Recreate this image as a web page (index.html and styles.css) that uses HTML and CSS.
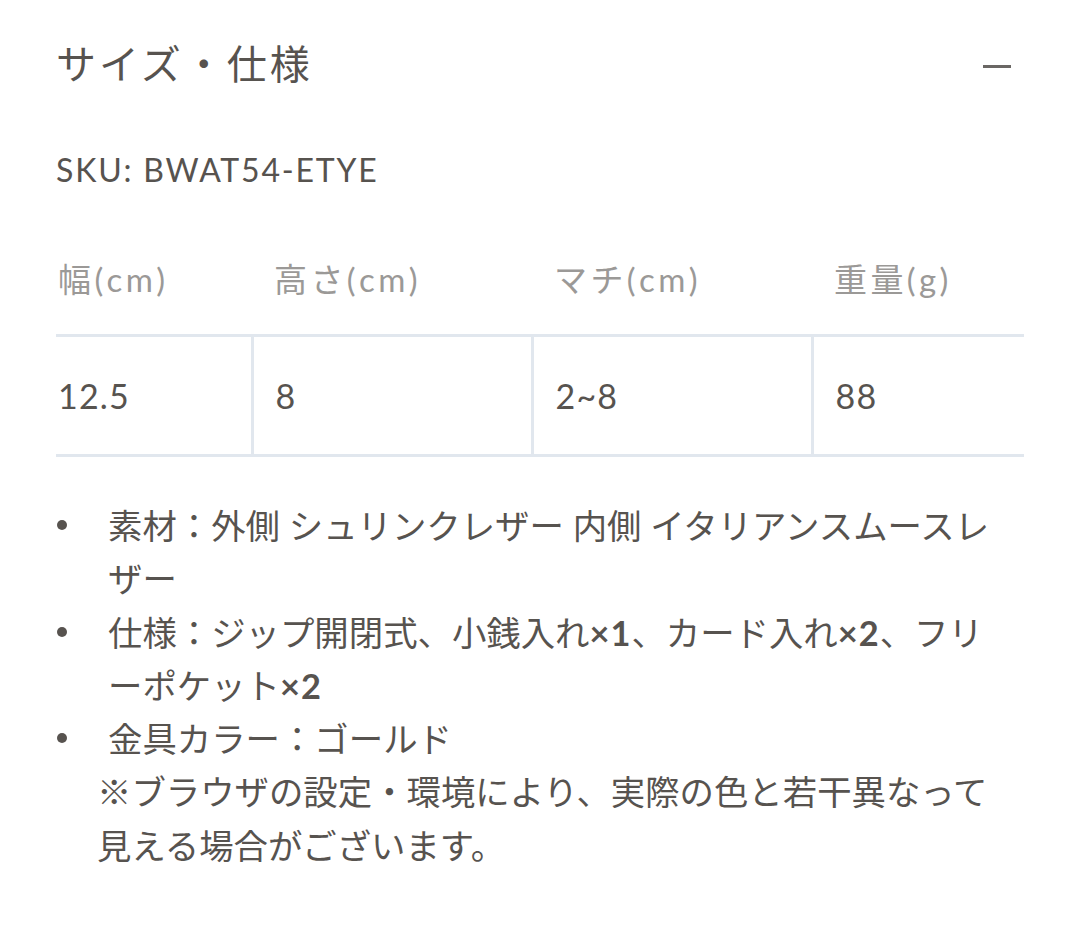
FILE: index.html
```html
<!DOCTYPE html>
<html lang="ja">
<head>
<meta charset="utf-8">
<title>サイズ・仕様</title>
<link rel="stylesheet" href="styles.css">
</head>
<body>
<section class="spec">
  <header class="spec-head">
    <h2 class="spec-title">サイズ・仕様</h2>
    <span class="toggle" aria-label="閉じる"></span>
  </header>
  <p class="sku">SKU: BWAT54-ETYE</p>
  <table class="size-table">
    <colgroup>
      <col class="c1"><col class="c2"><col class="c3"><col class="c4">
    </colgroup>
    <thead>
      <tr><th>幅(cm)</th><th>高さ(cm)</th><th>マチ(cm)</th><th>重量(g)</th></tr>
    </thead>
    <tbody>
      <tr><td>12.5</td><td>8</td><td>2~8</td><td>88</td></tr>
    </tbody>
  </table>
  <ul class="spec-list">
    <li><span class="item-text">素材：外側 シュリンクレザー 内側 イタリアンスムースレザー</span></li>
    <li><span class="item-text">仕様：ジップ開閉式、小銭入れ<b class="num">×1</b>、カード入れ<b class="num">×2</b>、フリーポケット<b class="num">×2</b></span></li>
    <li><span class="item-text">金具カラー：ゴールド</span></li>
  </ul>
  <p class="note">※ブラウザの設定・環境により、実際の色と若干異なって見える場合がございます。</p>
</section>
</body>
</html>
```
FILE: styles.css
```css
html, body {
  margin: 0;
  padding: 0;
  background: #ffffff;
}
body {
  font-family: "Lato", "Noto Sans CJK JP", sans-serif;
  color: #57534f;
}
.spec {
  padding: 32px 56px 0 56px;
}
.spec-head {
  display: flex;
  align-items: center;
  justify-content: space-between;
  height: 60px;
}
.spec-title {
  margin: 0;
  font-family: "Noto Sans CJK JP", sans-serif;
  font-weight: 400;
  font-size: 40px;
  line-height: 60px;
  letter-spacing: 3px;
  color: #57534f;
}
.toggle {
  display: block;
  width: 28px;
  height: 3px;
  background: #6a6764;
  margin-right: 13px;
  margin-top: 8px;
}
.sku {
  margin: 54px 0 0 0;
  font-size: 32px;
  line-height: 48px;
  letter-spacing: 1.8px;
  color: #57534f;
}
.size-table {
  margin-top: 28px;
  width: 968px;
  border-collapse: collapse;
  table-layout: fixed;
}
.c1 { width: 196px; }
.c2 { width: 280px; }
.c3 { width: 280px; }
.c4 { width: 212px; }
.size-table th {
  height: 112px;
  padding: 0 0 0 22px;
  text-align: left;
  vertical-align: middle;
  font-weight: 400;
  font-size: 33px;
  letter-spacing: 3.4px;
  color: #9b9997;
  border-bottom: 3px solid #e1e7ee;
}
.size-table td {
  height: 117px;
  padding: 0 0 0 22px;
  vertical-align: middle;
  font-size: 34px;
  letter-spacing: 1.2px;
  color: #57534f;
  border-bottom: 3px solid #e1e7ee;
  border-left: 3px solid #e1e7ee;
}
.size-table th:first-child,
.size-table td:first-child {
  padding-left: 2px;
  border-left: none;
}
.spec-list {
  list-style: none;
  margin: 42px 0 0 0;
  padding: 0 14px 0 0;
  font-size: 34.4px;
  line-height: 53.3px;
  line-break: loose;
}
.spec-list li {
  display: flex;
  align-items: flex-start;
}
.spec-list li::before {
  content: "";
  flex: 0 0 10px;
  height: 10px;
  border-radius: 50%;
  background: #57534f;
  margin: 21px 41px 0 1px;
}
.item-text {
  flex: 1 1 auto;
  min-width: 0;
}
.num {
  font-weight: 700;
  letter-spacing: 1px;
}
.note {
  margin: 0;
  padding: 0 20px 0 41px;
  font-size: 34.4px;
  line-height: 53.3px;
  line-break: loose;
}
```
